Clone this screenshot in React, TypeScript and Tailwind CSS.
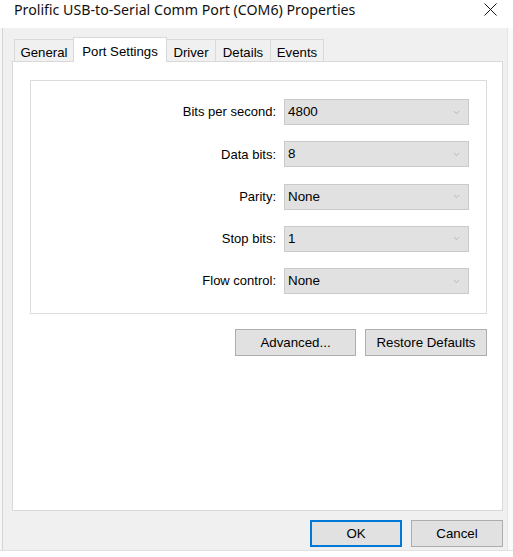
import { ChevronDown } from "lucide-react";

const tabs = [
  { label: "General", w: "w-[60px]" },
  { label: "Port Settings", w: "w-[94px]", active: true },
  { label: "Driver", w: "w-[50px]" },
  { label: "Details", w: "w-[56px]" },
  { label: "Events", w: "w-[54px]" },
];

const rows = [
  { label: "Bits per second:", value: "4800" },
  { label: "Data bits:", value: "8" },
  { label: "Parity:", value: "None" },
  { label: "Stop bits:", value: "1" },
  { label: "Flow control:", value: "None" },
];

function Combo({ value }: { value: string }) {
  return (
    <div className="ml-[8px] flex h-[26px] w-[185px] items-center justify-between border border-[#cacaca] bg-[#e1e1e1] pl-[3px] pr-[7px]">
      <span className="text-[13.4px]">{value}</span>
      <ChevronDown className="h-[9px] w-[9px] text-[#9a9a9a]" strokeWidth={1.5} />
    </div>
  );
}

function Button({ label, w, focus }: { label: string; w: string; focus?: boolean }) {
  return (
    <div
      className={`flex h-[27px] ${w} items-center justify-center bg-[#e1e1e1] text-[13.3px] ${
        focus ? "border-2 border-[#0078d7]" : "border border-[#adadad]"
      }`}
    >
      {label}
    </div>
  );
}

export default function App() {
  return (
    <div className="h-[557px] w-[513px] overflow-hidden bg-white font-['Liberation_Sans',Arial,sans-serif] text-[13px] text-black">
      {/* Title bar */}
      <div className="flex h-[28px] items-start justify-between bg-white pl-[14px] pr-[16px] pt-[2px]">
        <span className="font-['Noto_Sans',sans-serif] text-[14.2px] leading-[16px] text-[#111]">
          Prolific USB-to-Serial Comm Port (COM6) Properties
        </span>
        <svg width="13" height="13" viewBox="0 0 13 13" className="mt-[1px]">
          <path d="M0.5 0.5L12.5 12.5M12.5 0.5L0.5 12.5" stroke="#111" strokeWidth="1" />
        </svg>
      </div>

      <div className="flex h-[522px]">
        {/* left edge of window behind */}
        <div className="w-[3px] border-r border-[#d4d4d4] bg-[#f6f6f6]" />

        {/* Dialog body */}
        <div className="flex w-[504px] flex-col bg-[#f0f0f0] pl-[9px] pt-[9px]">
          {/* Tabs */}
          <div className="relative z-10 flex h-[24px] items-end pl-[2px]">
            {tabs.map((t) =>
              t.active ? (
                <div
                  key={t.label}
                  className={`-mb-px -ml-px flex h-[25px] ${t.w} items-start justify-center border border-b-0 border-[#d9d9d9] bg-white pt-[4px] text-[13.2px]`}
                >
                  {t.label}
                </div>
              ) : (
                <div
                  key={t.label}
                  className={`-ml-px flex h-[22px] ${t.w} items-center justify-center border border-b-0 border-[#d9d9d9] bg-[#f0f0f0] pt-[4px] text-[13.2px] first:ml-0`}
                >
                  {t.label}
                </div>
              )
            )}
          </div>

          {/* Tab panel */}
          <div className="h-[450px] w-[491px] border border-[#d9d9d9] bg-white pl-[17px] pt-[18px]">
            <div className="flex h-[234px] w-[457px] flex-col gap-[16.3px] border border-[#dcdcdc] pt-[18px]">
              {rows.map((r) => (
                <div key={r.label} className="flex items-center">
                  <div className="w-[245px] text-right text-[13px]">{r.label}</div>
                  <Combo value={r.value} />
                </div>
              ))}
            </div>
            <div className="mt-[15px] flex w-[457px] justify-end gap-[9px]">
              <Button label="Advanced..." w="w-[121px]" />
              <Button label="Restore Defaults" w="w-[122px]" />
            </div>
          </div>

          {/* Footer */}
          <div className="mt-[9px] flex w-[491px] justify-end gap-[9px]">
            <Button label="OK" w="w-[92px]" focus />
            <Button label="Cancel" w="w-[92px]" />
          </div>
        </div>

        {/* right edge of window behind */}
        <div className="flex-1 border-l border-[#e4e4e4] bg-[#fafafa]" />
      </div>

      <div className="h-[7px] border-t border-[#e0e0e0] bg-white" />
    </div>
  );
}
